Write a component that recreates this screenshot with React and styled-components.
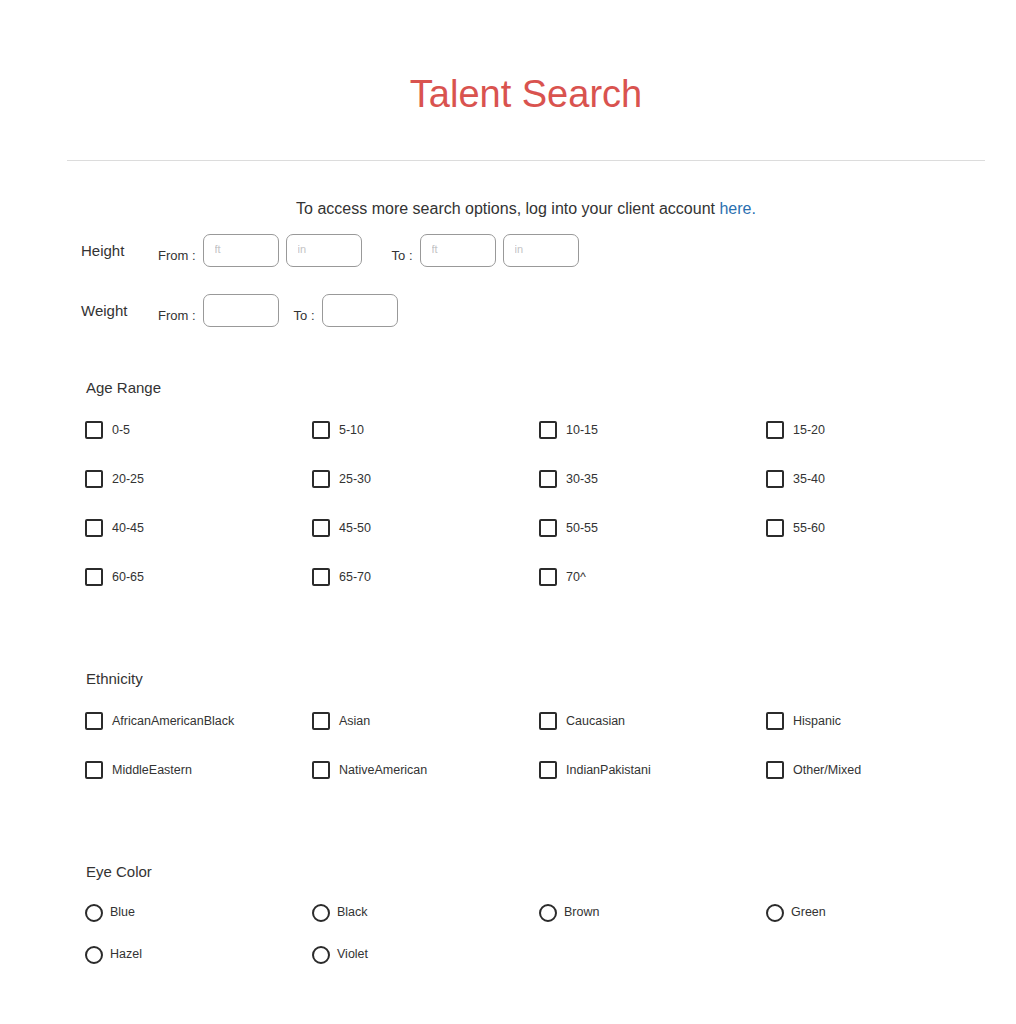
import React from "react";
import styled, { createGlobalStyle } from "styled-components";

const GlobalStyle = createGlobalStyle`
  body {
    margin: 0;
    background: #fff;
    font-family: "Liberation Sans", Arial, sans-serif;
    color: #333;
  }
`;

const Page = styled.div`
  width: 918px;
  margin-left: 67px;
  padding-bottom: 60px;
`;

const Title = styled.h1`
  margin: 73px 0 0;
  height: 42px;
  line-height: 42px;
  text-align: center;
  font-size: 38px;
  font-weight: normal;
  color: #d9534f;
`;

const Rule = styled.hr`
  margin: 45px 0 0;
  border: 0;
  border-top: 1px solid #dcdcdc;
`;

const Notice = styled.p`
  margin: 39px 0 0;
  line-height: 18px;
  font-size: 16px;
  text-align: center;
  color: #333;

  a {
    color: #2a6fb0;
    text-decoration: none;
  }
`;

const MeasureRow = styled.div`
  display: flex;
  align-items: center;
  padding-left: 14px;
  margin-top: ${p => p.$top}px;
  height: 33px;
`;

const RowLabel = styled.span`
  width: 77px;
  font-size: 15px;
  color: #333;
`;

const SmallLabel = styled.span`
  font-size: 13px;
  color: #333;
  margin-top: 10px;
  margin-left: ${p => p.$gap || 0}px;
  margin-right: 7px;
`;

const Box = styled.input`
  box-sizing: border-box;
  width: 76px;
  height: 33px;
  border: 1px solid #999;
  border-radius: 7px;
  padding: 0 11px 3px;
  font-family: inherit;
  font-size: 11px;
  color: #333;
  outline: none;

  & + & {
    margin-left: 7px;
  }

  &::placeholder {
    color: #c4c4c4;
  }
`;

const Section = styled.section`
  margin-top: ${p => p.$top}px;
  padding-left: 18px;
`;

const Heading = styled.h3`
  margin: 0;
  padding-left: 1px;
  height: 20px;
  line-height: 20px;
  font-size: 15px;
  font-weight: normal;
  color: #333;
`;

const Grid = styled.div`
  display: grid;
  grid-template-columns: repeat(4, 227px);
  grid-auto-rows: ${p => p.$row}px;
  margin-top: ${p => p.$top}px;
`;

const Option = styled.label`
  display: flex;
  align-items: center;
  font-size: 12.5px;
  color: #333;
`;

const Check = styled.span`
  box-sizing: border-box;
  width: 18px;
  height: 18px;
  border: 2px solid #2b2b2b;
  border-radius: ${p => (p.$round ? "50%" : "2px")};
  margin-right: ${p => (p.$round ? 7 : 9)}px;
  margin-top: ${p => (p.$round ? 2 : 0)}px;
`;

const ages = [
  "0-5", "5-10", "10-15", "15-20",
  "20-25", "25-30", "30-35", "35-40",
  "40-45", "45-50", "50-55", "55-60",
  "60-65", "65-70", "70^"
];

const ethnicities = [
  "AfricanAmericanBlack", "Asian", "Caucasian", "Hispanic",
  "MiddleEastern", "NativeAmerican", "IndianPakistani", "Other/Mixed"
];

const eyes = ["Blue", "Black", "Brown", "Green", "Hazel", "Violet"];

function OptionGrid({ items, row, top, round }) {
  return (
    <Grid $row={row} $top={top}>
      {items.map(item => (
        <Option key={item}>
          <Check $round={round} />
          {item}
        </Option>
      ))}
    </Grid>
  );
}

export default function App() {
  return (
    <Page>
      <GlobalStyle />
      <Title>Talent Search</Title>
      <Rule />
      <Notice>
        To access more search options, log into your client account{" "}
        <a href="#">here.</a>
      </Notice>

      <MeasureRow $top={16}>
        <RowLabel>Height</RowLabel>
        <SmallLabel>From :</SmallLabel>
        <Box placeholder="ft" />
        <Box placeholder="in" />
        <SmallLabel $gap={30}>To :</SmallLabel>
        <Box placeholder="ft" />
        <Box placeholder="in" />
      </MeasureRow>

      <MeasureRow $top={27}>
        <RowLabel>Weight</RowLabel>
        <SmallLabel>From :</SmallLabel>
        <Box />
        <SmallLabel $gap={15}>To :</SmallLabel>
        <Box />
      </MeasureRow>

      <Section $top={51}>
        <Heading>Age Range</Heading>
        <OptionGrid items={ages} row={49} top={7} />
      </Section>

      <Section $top={68}>
        <Heading>Ethnicity</Heading>
        <OptionGrid items={ethnicities} row={49} top={7} />
      </Section>

      <Section $top={68}>
        <Heading>Eye Color</Heading>
        <OptionGrid items={eyes} row={42} top={9} round />
      </Section>
    </Page>
  );
}
